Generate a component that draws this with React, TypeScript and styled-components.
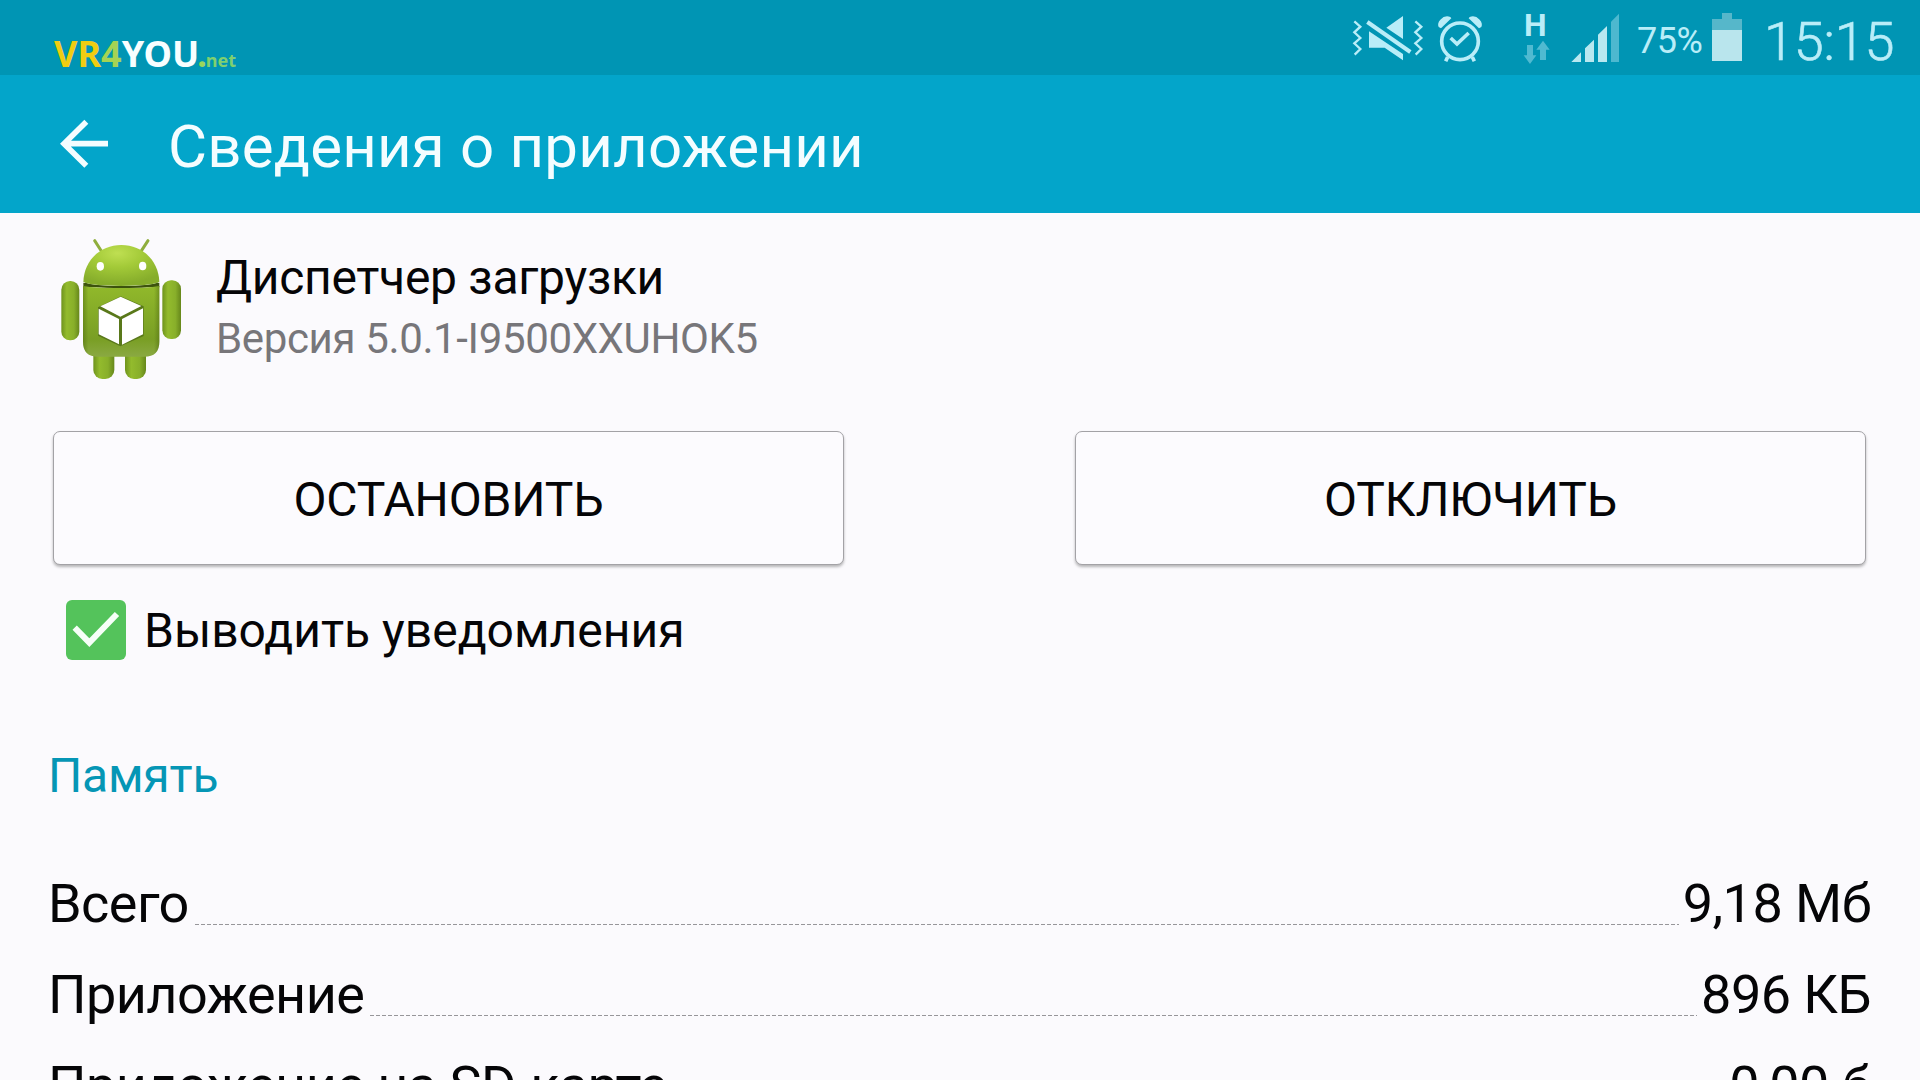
import { createGlobalStyle, styled } from 'styled-components';

const GlobalStyle = createGlobalStyle`
  * {
    box-sizing: border-box;
    margin: 0;
    padding: 0;
  }

  body {
    overflow: hidden;

    background: #fbfafd;
    font-family: Roboto, 'Noto Sans', sans-serif;
  }
`;

const Screen = styled.main`
  width: 1920px;
  height: 1080px;
  overflow: hidden;

  background: #fbfafd;
  color: #050507;
  white-space: nowrap;
`;

const StatusBar = styled.header`
  display: flex;
  justify-content: space-between;

  height: 75px;
  padding: 0 31px 0 54px;

  background: #0095b4;
  color: #b9edf8;
`;

const Logo = styled.div`
  display: flex;
  align-items: baseline;

  padding-top: 30px;

  font-family: 'Noto Sans', sans-serif;
  font-size: 36px;
  font-weight: 700;
  line-height: 48px;
`;

const LogoPart = styled.span<{ $color: string }>`
  color: ${(props) => props.$color};
`;

const LogoDot = styled.span`
  margin-left: -2px;

  color: #9ad65c;
  font-size: 34px;
`;

const LogoSuffix = styled.span`
  margin-left: -1px;

  color: #7fd06f;
  font-size: 18px;
`;

const StatusIcons = styled.div`
  display: flex;
`;

const StatusIcon = styled.svg<{ $width: number; $gap: number }>`
  width: ${(props) => props.$width}px;
  height: 75px;
  margin-right: ${(props) => props.$gap}px;
`;

const Network = styled.div`
  display: flex;
  flex-direction: column;

  width: 29px;
  margin-right: 20px;
  padding-top: 10px;
`;

const NetworkType = styled.span`
  height: 30px;
  padding-left: 2px;

  font-size: 32px;
  font-weight: 700;
  line-height: 30px;
`;

const NetworkArrows = styled.svg`
  width: 29px;
  height: 25px;
`;

const BatteryLevel = styled.span`
  width: 91px;
  padding-left: 16px;

  font-size: 36px;
  letter-spacing: -0.5px;
  line-height: 82px;
`;

const Clock = styled.time`
  width: 125px;

  font-size: 54px;
  font-weight: 300;
  letter-spacing: -0.2px;
  line-height: 83px;
  text-align: right;
  -webkit-text-stroke: 0.6px #b9edf8;
`;

const AppBar = styled.nav`
  display: flex;
  align-items: center;

  height: 138px;
  padding: 0 60px;

  background: #03a5ca;
  color: #f4fdff;
`;

const BackIcon = styled.svg`
  width: 50px;
  height: 50px;
  margin-right: 58px;
`;

const Title = styled.h1`
  padding-top: 5px;

  font-size: 60px;
  font-weight: 400;
  letter-spacing: 0.2px;
  line-height: 72px;
`;

const AppSummary = styled.section`
  display: flex;

  height: 218px;
  padding: 22px 60px 0;
`;

const RobotIcon = styled.svg`
  width: 122px;
  height: 146px;
  margin-right: 34px;
`;

const AppTexts = styled.div`
  padding-top: 13px;
`;

const AppName = styled.h2`
  font-size: 48px;
  font-weight: 400;
  letter-spacing: -0.3px;
  line-height: 60px;
`;

const AppVersion = styled.p`
  padding-top: 1px;

  color: #77767a;
  font-size: 42px;
  letter-spacing: -0.36px;
  line-height: 60px;
`;

const Actions = styled.div`
  display: flex;
  justify-content: space-between;

  padding: 0 54px 0 53px;
`;

const ActionButton = styled.button`
  width: 791px;
  height: 134px;
  padding-top: 3px;

  border: 1px solid #a3a2a6;
  border-radius: 7px;
  background: #fcfbfe;
  box-shadow: 0 2px 3px rgba(0, 0, 0, 0.28);
  color: #050507;
  font-family: inherit;
  font-size: 48px;
  letter-spacing: -0.15px;
`;

const NotificationOption = styled.label`
  display: flex;
  align-items: center;

  margin-top: 34px;
  padding-left: 66px;
`;

const CheckboxIcon = styled.svg`
  width: 60px;
  height: 60px;
  margin-right: 18px;
`;

const OptionLabel = styled.span`
  padding-top: 2px;

  font-size: 48px;
  line-height: 60px;
`;

const SectionTitle = styled.h3`
  margin-top: 83px;
  padding-left: 48px;

  color: #0596b5;
  font-size: 48px;
  font-weight: 400;
  letter-spacing: -0.2px;
  line-height: 64px;
`;

const StorageList = styled.ul`
  margin-top: 50px;
  padding: 0 49px 0 48px;

  list-style: none;
`;

const StorageItem = styled.li`
  display: flex;

  height: 91px;

  font-size: 54px;
  letter-spacing: -0.55px;
  line-height: 91px;
`;

const Leader = styled.span`
  flex: 1;

  height: 1px;
  margin: 66px 4px 0 6px;

  background: repeating-linear-gradient(90deg, #97969a 0 4px, transparent 4px 6px);
`;

const storageItems = [
  { label: 'Всего', value: '9,18 Мб' },
  { label: 'Приложение', value: '896 КБ' },
  { label: 'Приложение на SD-карте', value: '0,00 б' },
];

const MuteIcon = () => (
  <StatusIcon $width={72} $gap={13} viewBox="36 0 216 225" fill="#b9edf8">
    <path
      d="M43 64L61 80L43 97L61 114L43 130L61 147L44 164M226 64L244 80L226 97L244 114L226 130L244 147L227 164"
      fill="none"
      stroke="#b9edf8"
      strokeWidth="7"
    />
    <path d="M189 48V117L139 83ZM87 94L189 162V181L134 143H87Z" />
    <path d="M82 66L211 156" stroke="#b9edf8" strokeWidth="12" />
  </StatusIcon>
);

const AlarmIcon = () => (
  <StatusIcon $width={46} $gap={39} viewBox="291 0 138 225" fill="none" stroke="#b9edf8">
    <circle cx="360" cy="124" r="55" strokeWidth="11" />
    <path d="M332 114L351 132L386 99" strokeWidth="11" />
    <path d="M323 171L317 184M397 171L403 184" strokeWidth="11" />
    <path
      d="M296 81Q291 70 301 59Q315 44 331 51L334 55L303 85ZM424 81Q429 70 419 59Q405 44 389 51L386 55L417 85Z"
      fill="#b9edf8"
      stroke="none"
    />
  </StatusIcon>
);

const SignalIcon = () => (
  <StatusIcon $width={49} $gap={1} viewBox="693 0 147 225" fill="#b9e8f0">
    <path d="M694 186L723 157V186ZM735 186V145L762 119V186ZM774 186V104L801 78V186Z" />
    <path d="M813 186V65L837 41V186Z" fill="#4db8cf" />
  </StatusIcon>
);

const BatteryIcon = () => (
  <StatusIcon $width={30} $gap={22} viewBox="276 0 90 225">
    <path d="M276 90V57H306V39H336V57H366V90Z" fill="#56b7ca" />
    <path d="M276 90H366V183H276Z" fill="#b9e5ed" />
  </StatusIcon>
);

const AndroidRobot = () => (
  <RobotIcon viewBox="60 45 366 438">
    <defs>
      <linearGradient id="limb" x1="0" x2="1" y1="0" y2="0">
        <stop offset="0" stopColor="#6f931d" />
        <stop offset="0.3" stopColor="#93bb2d" />
        <stop offset="0.7" stopColor="#88af2a" />
        <stop offset="1" stopColor="#66871b" />
      </linearGradient>
      <linearGradient id="body" x1="0" x2="0" y1="0" y2="1">
        <stop offset="0" stopColor="#91b92b" />
        <stop offset="0.75" stopColor="#799e24" />
        <stop offset="1" stopColor="#8aa942" />
      </linearGradient>
      <linearGradient id="edges" x1="0" x2="1" y1="0" y2="0">
        <stop offset="0" stopColor="#4f6c10" stopOpacity="0.5" />
        <stop offset="0.07" stopColor="#4f6c10" stopOpacity="0" />
        <stop offset="0.93" stopColor="#4f6c10" stopOpacity="0" />
        <stop offset="1" stopColor="#4f6c10" stopOpacity="0.5" />
      </linearGradient>
      <radialGradient id="head" cx="0.45" cy="0.2" r="0.75">
        <stop offset="0" stopColor="#bfdf52" />
        <stop offset="0.45" stopColor="#a3ca38" />
        <stop offset="1" stopColor="#86ad2b" />
      </radialGradient>
    </defs>
    <path d="M164 62L184 93M324 62L303 94" stroke="#8fae3d" strokeWidth="9" strokeLinecap="round" />
    <rect x="160" y="380" width="63" height="97" rx="27" fill="url(#limb)" />
    <rect x="255" y="380" width="63" height="97" rx="27" fill="url(#limb)" />
    <rect x="64" y="183" width="54" height="178" rx="26" fill="url(#limb)" />
    <rect x="367" y="181" width="56" height="176" rx="26" fill="url(#limb)" />
    <path d="M130 188Q244 214 358 188V202H130Z" fill="#435a10" />
    <path
      d="M129 198Q136 202 244 204Q351 202 358 198V365Q358 410 313 410H174Q129 410 129 365Z"
      fill="url(#body)"
    />
    <path
      d="M129 198Q136 202 244 204Q351 202 358 198V365Q358 410 313 410H174Q129 410 129 365Z"
      fill="url(#edges)"
    />
    <path d="M134 190Q150 200 244 201Q340 200 355 190" fill="none" stroke="#3c520d" strokeWidth="6" />
    <path d="M130 186C132 122 180 75 244 75C308 75 356 122 358 186Q340 197 244 198Q148 197 130 186Z" fill="url(#head)" />
    <ellipse cx="181" cy="139" rx="11" ry="13" fill="#fff" />
    <ellipse cx="308" cy="138" rx="11" ry="13" fill="#fff" />
    <path d="M174 262L242 229L311 259V348L241 379L174 347Z" fill="#59781a" />
    <path d="M181 259L242 230L304 258L241 290ZM176 266L237 297V373L176 343ZM246 297L309 265V343L246 374Z" fill="#fff" />
  </RobotIcon>
);

const App = () => {
  return (
    <>
      <GlobalStyle />
      <Screen>
        <StatusBar>
          <Logo>
            <LogoPart $color="#f0cd12">VR</LogoPart>
            <LogoPart $color="#a5d354">4</LogoPart>
            <LogoPart $color="#f8feff">YOU</LogoPart>
            <LogoDot>.</LogoDot>
            <LogoSuffix>net</LogoSuffix>
          </Logo>
          <StatusIcons>
            <MuteIcon />
            <AlarmIcon />
            <Network>
              <NetworkType>H</NetworkType>
              <NetworkArrows viewBox="546 120 87 75" fill="#50bad1">
                <path d="M561 135H579V166H589L570 192L551 166H561ZM600 180V149H589L609 122L629 149H618V180Z" />
              </NetworkArrows>
            </Network>
            <SignalIcon />
            <BatteryLevel>75%</BatteryLevel>
            <BatteryIcon />
            <Clock>15:15</Clock>
          </StatusIcons>
        </StatusBar>

        <AppBar>
          <BackIcon viewBox="60 88 150 150" fill="none" stroke="#f4fdff">
            <path d="M139 96L72 162L139 228M72 162H204" strokeWidth="17" />
          </BackIcon>
          <Title>Сведения о приложении</Title>
        </AppBar>

        <AppSummary>
          <AndroidRobot />
          <AppTexts>
            <AppName>Диспетчер загрузки</AppName>
            <AppVersion>Версия 5.0.1-I9500XXUHOK5</AppVersion>
          </AppTexts>
        </AppSummary>

        <Actions>
          <ActionButton>ОСТАНОВИТЬ</ActionButton>
          <ActionButton>ОТКЛЮЧИТЬ</ActionButton>
        </Actions>

        <NotificationOption>
          <CheckboxIcon viewBox="0 0 180 180">
            <rect width="180" height="180" rx="18" fill="#54c35b" />
            <path d="M26 83L70 128L153 42" fill="none" stroke="#f7fff8" strokeWidth="18" />
          </CheckboxIcon>
          <OptionLabel>Выводить уведомления</OptionLabel>
        </NotificationOption>

        <SectionTitle>Память</SectionTitle>
        <StorageList>
          {storageItems.map((item) => (
            <StorageItem key={item.label}>
              <span>{item.label}</span>
              <Leader />
              <span>{item.value}</span>
            </StorageItem>
          ))}
        </StorageList>
      </Screen>
    </>
  );
};

export default App;
